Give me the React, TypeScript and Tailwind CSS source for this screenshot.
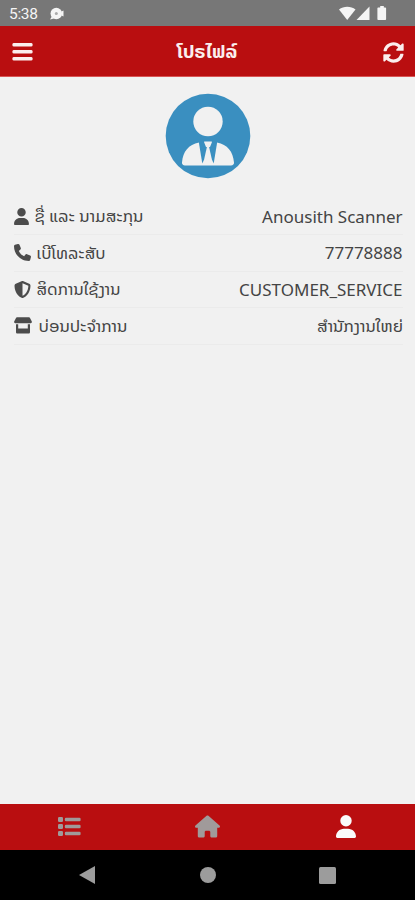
import type { ReactNode } from "react";
import { FaUser, FaPhone, FaShieldHalved, FaHouse } from "react-icons/fa6";
import { FaSyncAlt } from "react-icons/fa";

const lao = "font-['Noto_Sans_Lao','Noto_Sans','DejaVu_Sans',sans-serif]";

function MenuIcon() {
  return (
    <svg className="mt-[2px] ml-[0.5px] h-[18px] w-[21px]" viewBox="0 0 21 18" fill="currentColor">
      <rect x=".5" y="0" width="20" height="3.600" rx="1.300" />
      <rect x=".5" y="7" width="20" height="3.600" rx="1.300" />
      <rect x=".5" y="14" width="20" height="3.600" rx="1.300" />
    </svg>
  );
}

function ListIcon() {
  return (
    <svg className="mb-px ml-px h-[20px] w-[23px]" viewBox="0 0 23 20" fill="currentColor">
      <rect x="0" y="0" width="5" height="5" rx="1.200" />
      <rect x="0" y="7" width="5" height="5" rx="1.200" />
      <rect x="0" y="14" width="5" height="5" rx="1.200" />
      <rect x="6.800" y=".8" width="15.800" height="3.500" rx="1.200" />
      <rect x="6.800" y="7.800" width="15.800" height="3.500" rx="1.200" />
      <rect x="6.800" y="14.800" width="15.800" height="3.500" rx="1.200" />
    </svg>
  );
}

function ShopIcon() {
  return (
    <svg className="mr-[2px] h-[17px] w-[18px]" viewBox="0 0 18 17" fill="currentColor">
      <path d="M3 .3h12c.5 0 .8.2 1 .6l1.700 3.400c.5 1-.1 1.900-1 1.900H1.300c-.9 0-1.500-.9-1-1.900L2 .9C2.200.5 2.500.3 3 .3z" />
      <path d="M2 7.200h2.200v4.300h9.600V7.200H16V15c0 1-.6 1.600-1.500 1.600h-11C2.600 16.600 2 16 2 15z" />
    </svg>
  );
}

function Avatar() {
  return (
    <svg className="h-[86px] w-[86px]" viewBox="0 0 86 86">
      <circle cx="43" cy="43" r="42.300" fill="#3a8fc0" />
      <circle cx="43" cy="28.500" r="14.700" fill="#f1f1f1" />
      <path d="M34 49.500C23.500 51.500 18 58.500 17 69.500c-.2 1.800 1 2.900 3 2.900h46c2 0 3.200-1.100 3-2.900C68 58.500 62.500 51.500 52 49.500z" fill="#f1f1f1" />
      <path d="M33.700 48.500h8l.2 5.500-2.800 12.500-1.800 4z" fill="#3a8fc0" />
      <path d="M52.300 48.500h-8l-.2 5.500 2.800 12.500 1.800 4z" fill="#3a8fc0" />
      <path d="M39.700 48.400h6.600c.5 0 .8.400.6.900L45 54h-4l-1.900-4.700c-.2-.5.100-.9.600-.9z" fill="#f1f1f1" />
    </svg>
  );
}

interface RowProps {
  icon: ReactNode;
  label: string;
  value: string;
  width: number;
  laoValue?: boolean;
}

function Row({ icon, label, value, width, laoValue }: RowProps) {
  return (
    <div className="flex h-[36.500px] items-center border-b border-[#ebebeb] pr-[0.5px] text-[#444444]">
      <span className="mr-[4px] flex shrink-0 items-center text-[#4c4c4c]">{icon}</span>
      <svg className="h-9 shrink-0 overflow-visible" style={{ width }}>
        <text x="0.5" y="24" textLength={width} lengthAdjust="spacingAndGlyphs" fill="currentColor" className={`${lao} text-[15.500px]`}>{label}</text>
      </svg>
      <span className="flex-1" />
      {laoValue ? (
        <svg className="h-9 w-[86px] shrink-0 overflow-visible">
          <text x="0" y="24" textLength={86} lengthAdjust="spacingAndGlyphs" fill="currentColor" className={`${lao} text-[15.500px]`}>{value}</text>
        </svg>
      ) : (
        <span className="font-['Noto_Sans',sans-serif] text-[17px] leading-none whitespace-nowrap">{value}</span>
      )}
    </div>
  );
}

export default function App() {
  return (
    <div className="flex h-[900px] w-[415px] flex-col overflow-hidden bg-[#f1f1f1] font-['Noto_Sans',sans-serif]">
      <div className="flex h-[26px] shrink-0 items-center bg-[#777777] pl-[9px] text-[#f5f5f5]">
        <span className="w-[40px] pt-[3px] font-[Roboto,sans-serif] text-[15.500px] leading-none tracking-[-0.3px]">5:38</span>
        <svg className="mt-px h-[14px] w-[16px]" viewBox="0 0 16 14" fill="currentColor">
          <path d="M1 12.500L2.800 9.500 5 11.500z" />
          <circle cx="7.300" cy="6.500" r="5.800" />
          <path d="M12.500 4.500l2-1v6l-2-1z" />
          <circle cx="7.300" cy="6.500" r="1.500" fill="#aaa" />
        </svg>
        <span className="flex-1" />
        <svg className="mr-[28px] h-[16px] w-[48px]" viewBox="0 0 48 16" fill="currentColor">
          <path d="M0 4.500C4.500.7 12 .7 16.500 4.500L8.200 15z" />
          <path d="M30.500 1.500V15H17.500z" />
          <path d="M39.200 2.500h2V1h3.600v1.500h1.500c.5 0 .8.300.8.800v11c0 .5-.3.800-.8.800h-7.100c-.5 0-.8-.3-.8-.8v-11c0-.5.3-.8.800-.8z" />
        </svg>
      </div>

      <header className="flex h-[51px] shrink-0 items-center justify-between border-b border-[#d95555] bg-[#b90e10] px-[11px] text-[#fbeeee]">
        <MenuIcon />
        <svg className="h-[50px] w-[62px] overflow-visible">
          <text x="-0.5" y="31.500" textLength={61} lengthAdjust="spacingAndGlyphs" fill="currentColor" className={`${lao} text-[17px] font-bold`}>ໂປຣໄຟລ໌</text>
        </svg>
        <FaSyncAlt className="mt-[2px] h-[21px] w-[21px]" />
      </header>

      <main className="flex-1 px-3">
        <div className="flex h-[121.500px] justify-center pt-[16px]">
          <Avatar />
        </div>
        <div className="pl-[2px]">
          <Row icon={<FaUser className="mr-px h-[17px] w-[15px]" />} label="ຊື່ ແລະ ນາມສະກຸນ" value="Anousith Scanner" width={109} />
          <Row icon={<FaPhone className="mr-px h-[17px] w-[17px]" />} label="ເບີໂທລະສັບ" value="77778888" width={69} />
          <Row icon={<FaShieldHalved className="mr-px h-[17px] w-[17px]" />} label="ສິດການໃຊ້ງານ" value="CUSTOMER_SERVICE" width={84} />
          <Row icon={<ShopIcon />} label="ບ່ອນປະຈຳການ" value="ສຳນັກງານໃຫຍ່" width={89} laoValue />
        </div>
      </main>

      <nav className="grid h-[46px] shrink-0 grid-cols-3 items-center justify-items-center bg-[#b90e10] text-[#a09a9a]">
        <ListIcon />
        <FaHouse className="mb-px ml-px h-[23px] w-[25px]" />
        <FaUser className="mb-px ml-px h-[23px] w-[20px] text-[#fafafa]" />
      </nav>

      <div className="flex h-[50px] shrink-0 items-center justify-between bg-black pr-[79px] pl-[79px] text-[#9c9c9c]">
        <svg className="h-[18px] w-[17px]" viewBox="0 0 17 18" fill="currentColor"><path d="M0 9L16 0v18z" /></svg>
        <span className="h-4 w-4 rounded-full bg-[#9c9c9c]" />
        <span className="h-[17px] w-[17px] rounded-[1.500px] bg-[#9c9c9c]" />
      </div>
    </div>
  );
}
